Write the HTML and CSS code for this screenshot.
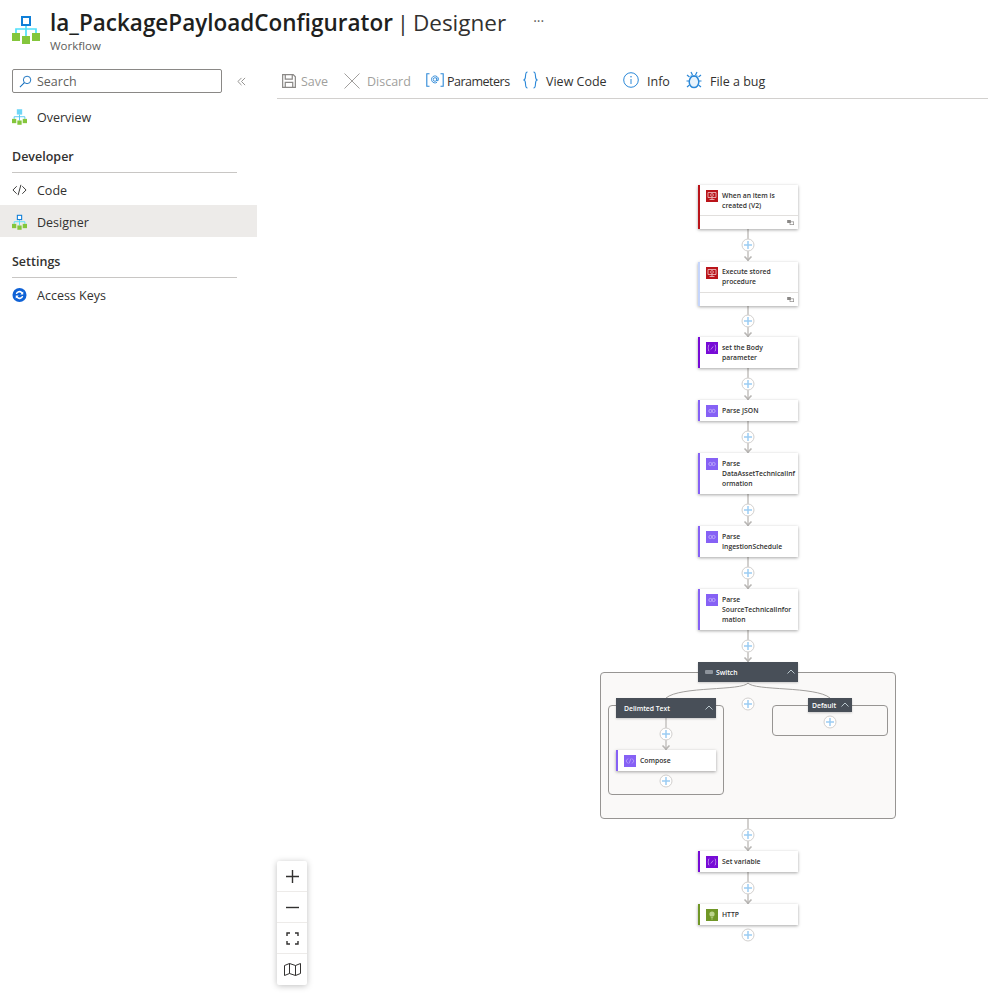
FILE: index.html
```html
<!DOCTYPE html>
<html lang="en">
<head>
    <meta charset="UTF-8">
    <meta name="viewport" content="width=device-width, initial-scale=1.0">
    <link rel="stylesheet" href="styles.css">
    <title>la_PackagePayloadConfigurator | Designer</title>
</head>
<body>

    <svg class="defs" width="0" height="0">
        <symbol id="flowIcon" viewBox="0 0 28 29">
            <path d="M14 10v11M4 18v-4h20v4" fill="none" stroke="#50e0fa" stroke-width="1.700"/>
            <rect x="10" y="2" width="8" height="8" fill="#fff" stroke="#0f7fd8" stroke-width="2"/>
            <rect x="0" y="18" width="8" height="8" fill="#84c63c"/>
            <rect x="10" y="21" width="8" height="8" fill="#84c63c"/>
            <rect x="20" y="18" width="8" height="8" fill="#84c63c"/>
        </symbol>
        <symbol id="flowIconLight" viewBox="0 0 28 29">
            <path d="M14 10v11M4 18v-4h20v4" fill="none" stroke="#50c8f0" stroke-width="1.700"/>
            <rect x="9" y="0" width="10" height="10" fill="#6fd6f7"/>
            <rect x="0" y="18" width="8" height="8" fill="#84c63c"/>
            <rect x="10" y="21" width="8" height="8" fill="#84c63c"/>
            <rect x="20" y="18" width="8" height="8" fill="#84c63c"/>
        </symbol>
        <symbol id="sqlIcon" viewBox="0 0 12 12">
            <rect width="12" height="12" fill="#ba141a"/>
            <path d="M2 2.500h8v5h-8zM3.500 9.500h5M6 7.500v2" fill="none" stroke="#f0c8ca" stroke-width=".8"/>
            <circle cx="6" cy="5" r="1.400" fill="none" stroke="#f0c8ca" stroke-width=".7"/>
        </symbol>
        <symbol id="varIcon" viewBox="0 0 12 12">
            <rect width="12" height="12" fill="#770bd6"/>
            <path d="M3.300 2.500c-1.300 0-.3 3-1.300 3.500 1 .5 0 3.500 1.300 3.500M8.700 2.500c1.300 0 .3 3 1.300 3.500-1 .5 0 3.500-1.300 3.500M4.800 7.500l2.400-3" fill="none" stroke="#cfb0ef" stroke-width=".7"/>
        </symbol>
        <symbol id="jsonIcon" viewBox="0 0 12 12">
            <rect width="12" height="12" fill="#8661f5"/>
            <circle cx="4.400" cy="6" r="1.600" fill="none" stroke="#c4b2fa" stroke-width=".8"/>
            <circle cx="7.600" cy="6" r="1.600" fill="none" stroke="#c4b2fa" stroke-width=".8"/>
        </symbol>
        <symbol id="composeIcon" viewBox="0 0 12 12">
            <rect width="12" height="12" fill="#8661f5"/>
            <path d="M4 3.500L2 6l2 2.500M8 3.500L10 6 8 8.500M5 8.500l2-5" fill="none" stroke="#c4b2fa" stroke-width=".7"/>
        </symbol>
        <symbol id="httpIcon" viewBox="0 0 12 12">
            <rect width="12" height="12" fill="#709727"/>
            <circle cx="6" cy="5" r="2.600" fill="#bcd48c"/>
            <path d="M4.800 8.600h2.400M5.200 10h1.600" stroke="#bcd48c" stroke-width=".8"/>
        </symbol>
        <symbol id="linkIcon" viewBox="0 0 8 6">
            <rect x="0" y="0" width="4.400" height="3.600" fill="#8a8886"/>
            <rect x="3.400" y="2.200" width="4.400" height="3.400" fill="none" stroke="#8a8886" stroke-width=".8"/>
        </symbol>
    </svg>

    <header class="page-head">
        <svg class="head-icon"><use href="#flowIcon"/></svg>
        <div class="head-text">
            <h1><b>la_PackagePayloadConfigurator</b> | Designer</h1>
            <p>Workflow</p>
        </div>
        <span class="head-more">···</span>
    </header>

    <div class="page-body">
        <nav class="side">
            <div class="search-row">
                <div class="search-box">
                    <svg class="search-icon" viewBox="0 0 14 14"><circle cx="8.700" cy="5.300" r="4" fill="none" stroke="#0f6cbd"/><path d="M5.800 8.200L1 13" stroke="#0f6cbd" stroke-width="1.100"/></svg>
                    <span>Search</span>
                </div>
                <svg class="collapse" viewBox="0 0 10 10"><path d="M5 1L1 5l4 4M9 1L5 5l4 4" fill="none" stroke="#8a8886"/></svg>
            </div>
            <a class="nav-item overview"><svg class="nav-icon"><use href="#flowIconLight"/></svg>Overview</a>
            <h2 class="nav-title">Developer</h2>
            <a class="nav-item">
                <svg class="nav-icon" viewBox="0 0 16 16"><path d="M5 4L1 8l4 4M11 4l4 4-4 4M9.500 2.500l-3 11" fill="none" stroke="#323130"/></svg>Code
            </a>
            <a class="nav-item active"><svg class="nav-icon"><use href="#flowIcon"/></svg>Designer</a>
            <h2 class="nav-title settings">Settings</h2>
            <a class="nav-item">
                <svg class="nav-icon" viewBox="0 0 16 16">
                    <circle cx="8" cy="8" r="7.500" fill="#0f62d6"/>
                    <path d="M4 7a4 4 0 0 1 7-2l1-.8v3.300H8.800l1.200-1.200A2.700 2.700 0 0 0 5.400 7zM12 9a4 4 0 0 1-7 2l-1 .8V8.500h3.200L6 9.700A2.700 2.700 0 0 0 10.600 9z" fill="#fff"/>
                </svg>Access Keys
            </a>
        </nav>

        <main class="main">
            <div class="command-bar">
                <span class="cmd disabled cmd-save">
                    <svg viewBox="0 0 15 15"><path d="M.7.700h11.300l2.300 2.300v11.300H.7zM3.500 .700v4.800h7.500V.700M3.500 14.300V9h8v5.300" fill="none" stroke="#8a8886" stroke-width="1.300"/></svg>Save
                </span>
                <span class="cmd disabled cmd-discard">
                    <svg class="wide" viewBox="0 0 16 16"><path d="M.5.500l15 15M15.500.500l-15 15" stroke="#a19f9d"/></svg>Discard
                </span>
                <span class="cmd cmd-params">
                    <svg class="params" viewBox="0 0 18 14"><path d="M3.500.700H.8v12.600h2.700M14.500.700h2.700v12.600h-2.700" fill="none" stroke="#2b88d8" stroke-width="1.100"/><circle cx="9" cy="6.500" r="1.800" fill="none" stroke="#2b88d8" stroke-width=".9"/><path d="M10.800 4.500v3.200q1.700.6 1.700-1.400a3.500 3.500 0 1 0-1.500 3" fill="none" stroke="#2b88d8" stroke-width=".9"/></svg>Parameters
                </span>
                <span class="cmd cmd-code">
                    <svg viewBox="0 0 15 18"><path d="M4.500 1C1 1 4 8 1 9c3 1 0 8 3.500 8M10.500 1C14 1 11 8 14 9c-3 1 0 8-3.500 8" fill="none" stroke="#2b88d8" stroke-width="1.100"/></svg>View Code
                </span>
                <span class="cmd cmd-info">
                    <svg viewBox="0 0 16 16"><circle cx="8" cy="8" r="7.300" fill="none" stroke="#2b88d8"/><path d="M8 7v5" stroke="#2b88d8"/><circle cx="8" cy="4.700" r=".8" fill="#2b88d8"/></svg>Info
                </span>
                <span class="cmd cmd-bug">
                    <svg viewBox="0 0 16 18"><ellipse cx="8" cy="10.800" rx="4.800" ry="5.800" fill="#e8f3fc" stroke="#2b88d8" stroke-width="1.500"/><path d="M4.500 5.200h7M5 1l1.500 3M11 1L9.500 4M3 10H.5M15.500 10H13M3.500 14L1 16M12.500 14l2.500 2M3.500 6L1 4M12.500 6L15 4" fill="none" stroke="#2b88d8" stroke-width="1.200"/></svg>File a bug
                </span>
            </div>

            <div class="canvas">
                <div class="group group-switch"></div>
                <div class="group group-case"></div>
                <div class="group group-default"></div>

                <!-- coordinates in the viewBox are page coordinates -->
                <svg class="wires" viewBox="257 99 731 897">
                    <defs>
                        <path id="arrow" d="M-3.500-4.500L0-1 3.500-4.500" fill="none" stroke="#b8b6b4" stroke-width="1.600"/>
                        <g id="plus">
                            <circle r="6" fill="#fff" stroke="#d2d0ce"/>
                            <path d="M-4 0h8M0-4v8" stroke="#9ccdf3" stroke-width="1.500"/>
                        </g>
                    </defs>
                    <path class="wire" d="M748 229V261M748 305V337M748 368V400M748 421V453M748 494V526M748 557V589M748 630V662M748 819V851M748 872V904M666 718V750"/>
                    <path class="curve" d="M748 683C742 691 680 686 666 698M748 683C754 691 816 686 830 698"/>
                    <use href="#arrow" x="748" y="261"/>
                    <use href="#arrow" x="748" y="337"/>
                    <use href="#arrow" x="748" y="400"/>
                    <use href="#arrow" x="748" y="453"/>
                    <use href="#arrow" x="748" y="526"/>
                    <use href="#arrow" x="748" y="589"/>
                    <use href="#arrow" x="748" y="662"/>
                    <use href="#arrow" x="748" y="851"/>
                    <use href="#arrow" x="748" y="904"/>
                    <use href="#arrow" x="666" y="750"/>
                    <use href="#plus" x="748" y="245"/>
                    <use href="#plus" x="748" y="321"/>
                    <use href="#plus" x="748" y="384"/>
                    <use href="#plus" x="748" y="437"/>
                    <use href="#plus" x="748" y="510"/>
                    <use href="#plus" x="748" y="573"/>
                    <use href="#plus" x="748" y="646"/>
                    <use href="#plus" x="748" y="704"/>
                    <use href="#plus" x="666" y="734"/>
                    <use href="#plus" x="666" y="781"/>
                    <use href="#plus" x="830" y="722"/>
                    <use href="#plus" x="748" y="835"/>
                    <use href="#plus" x="748" y="888"/>
                    <use href="#plus" x="748" y="935"/>
                </svg>

                <div class="card sql n1">
                    <div class="card-main"><svg class="card-icon"><use href="#sqlIcon"/></svg><span>When an item is<br>created (V2)</span></div>
                    <div class="card-foot"><svg><use href="#linkIcon"/></svg></div>
                </div>
                <div class="card sql pale n2">
                    <div class="card-main"><svg class="card-icon"><use href="#sqlIcon"/></svg><span>Execute stored<br>procedure</span></div>
                    <div class="card-foot"><svg><use href="#linkIcon"/></svg></div>
                </div>
                <div class="card var n3">
                    <div class="card-main"><svg class="card-icon"><use href="#varIcon"/></svg><span>set the Body<br>parameter</span></div>
                </div>
                <div class="card json n4">
                    <div class="card-main"><svg class="card-icon"><use href="#jsonIcon"/></svg><span>Parse JSON</span></div>
                </div>
                <div class="card json n5">
                    <div class="card-main"><svg class="card-icon"><use href="#jsonIcon"/></svg><span>Parse<br>DataAssetTechnicalInf<br>ormation</span></div>
                </div>
                <div class="card json n6">
                    <div class="card-main"><svg class="card-icon"><use href="#jsonIcon"/></svg><span>Parse<br>IngestionSchedule</span></div>
                </div>
                <div class="card json n7">
                    <div class="card-main"><svg class="card-icon"><use href="#jsonIcon"/></svg><span>Parse<br>SourceTechnicalInfor<br>mation</span></div>
                </div>

                <div class="scope scope-switch">
                    <svg class="scope-glyph" viewBox="0 0 8 4"><rect width="8" height="4" rx="1" fill="#8d939b"/></svg>
                    <span>Switch</span>
                    <svg class="chevron" viewBox="0 0 8 5"><path d="M.5 4.500L4 1l3.500 3.500" fill="none" stroke="#b9c7cc"/></svg>
                </div>
                <div class="scope scope-case">
                    <span>Delimted Text</span>
                    <svg class="chevron" viewBox="0 0 8 5"><path d="M.5 4.500L4 1l3.500 3.500" fill="none" stroke="#b9c7cc"/></svg>
                </div>
                <div class="scope scope-default">
                    <span>Default</span>
                    <svg class="chevron" viewBox="0 0 8 5"><path d="M.5 4.500L4 1l3.500 3.500" fill="none" stroke="#b9c7cc"/></svg>
                </div>

                <div class="card json n8">
                    <div class="card-main"><svg class="card-icon"><use href="#composeIcon"/></svg><span>Compose</span></div>
                </div>
                <div class="card var n9">
                    <div class="card-main"><svg class="card-icon"><use href="#varIcon"/></svg><span>Set variable</span></div>
                </div>
                <div class="card http n10">
                    <div class="card-main"><svg class="card-icon"><use href="#httpIcon"/></svg><span>HTTP</span></div>
                </div>

                <div class="zoom-tools">
                    <button><svg viewBox="0 0 13 13"><path d="M6.500 0v13M0 6.500h13" stroke="#323130" stroke-width="1.400"/></svg></button>
                    <button><svg viewBox="0 0 13 13"><path d="M0 6.500h13" stroke="#323130" stroke-width="1.400"/></svg></button>
                    <button><svg viewBox="0 0 13 13"><path d="M1 4V1h3M9 1h3v3M12 9v3H9M4 12H1V9" fill="none" stroke="#323130" stroke-width="1.400"/></svg></button>
                    <button><svg class="map" viewBox="0 0 17 13"><path d="M.5 2.500l5-2 6 2 5-2v10l-5 2-6-2-5 2zM5.500.500v10M11.500 2.500v10" fill="none" stroke="#323130"/></svg></button>
                </div>
            </div>
        </main>
    </div>

</body>
</html>
```

FILE: styles.css
```css
html, body {
    height: 100%;
}

body {
    margin: 0;
    font-family: "Open Sans", "Noto Sans", Arial, sans-serif;
    color: #323130;
    background-color: #fff;
    display: flex;
    flex-direction: column;
    overflow: hidden;
}

.defs {
    position: absolute;
}

/* page title */
.page-head {
    height: 60px;
    display: flex;
    align-items: flex-start;
    padding: 8px 0 0 12px;
    box-sizing: border-box;
}

.head-icon {
    width: 28px;
    height: 29px;
    margin: 7px 10px 0 0;
    flex-shrink: 0;
}

.head-text h1 {
    margin: 0;
    font-size: 22.500px;
    line-height: 30px;
    font-weight: 400;
    color: #323130;
    word-spacing: -2px;
}

.head-text h1 b {
    font-weight: 600;
    color: #201f1e;
}

.head-text p {
    margin: 0;
    font-size: 11.500px;
    line-height: 16px;
    color: #605e5c;
}

.head-more {
    margin: 3px 0 0 27px;
    font-size: 14px;
    line-height: 20px;
    color: #605e5c;
}

.page-body {
    flex: 1;
    display: flex;
    min-height: 0;
}

/* left menu */
.side {
    width: 257px;
    flex-shrink: 0;
    font-size: 12.500px;
}

.search-row {
    display: flex;
    align-items: center;
    padding: 9px 0 0 12px;
    height: 24px;
    margin-bottom: 8px;
}

.search-box {
    width: 210px;
    height: 24px;
    box-sizing: border-box;
    border: 1px solid #8a8886;
    border-radius: 2px;
    display: flex;
    align-items: center;
    padding-left: 6px;
    color: #605e5c;
}

.search-icon {
    width: 13px;
    height: 13px;
    margin-right: 5px;
}

.collapse {
    width: 9px;
    height: 9px;
    margin-left: 15px;
}

.nav-item {
    height: 32px;
    display: flex;
    align-items: center;
    padding-left: 12px;
    color: #323130;
}

.nav-icon {
    width: 15px;
    height: 16px;
    margin-right: 10px;
}

.nav-item.active {
    background-color: #edebe9;
    padding-top: 2px;
    height: 30px;
    margin-top: -1px;
}

.nav-title {
    margin: 16px 20px 1px 12px;
    height: 23px;
    font-size: 12.500px;
    line-height: 16px;
    font-weight: 600;
    color: #323130;
    border-bottom: 1px solid #c8c6c4;
}

.nav-title.settings {
    margin-top: 17px;
}

/* commands */
.main {
    flex: 1;
    display: flex;
    flex-direction: column;
    min-width: 0;
}

.command-bar {
    height: 39px;
    margin-left: 20px;
    box-sizing: border-box;
    border-bottom: 1px solid #d2d0ce;
    display: flex;
    align-items: center;
    padding: 4px 0 0 5px;
    font-size: 12.500px;
}

.cmd {
    display: flex;
    align-items: center;
    white-space: nowrap;
}

.cmd svg {
    width: 14px;
    height: 14px;
    margin-right: 5px;
}

.cmd.disabled {
    color: #a19f9d;
}

.cmd-save {
    width: 62px;
}

.cmd-discard {
    width: 82px;
}

.cmd svg.wide {
    width: 16px;
    height: 16px;
    margin-right: 7px;
}

.cmd-params {
    width: 97px;
    letter-spacing: -0.5px;
}

.cmd svg.params {
    width: 18px;
    margin: -3px 3px 0 0;
}

.cmd-code {
    width: 100px;
}

.cmd-code svg {
    width: 15px;
    height: 18px;
    margin: -3px 8px 0 0;
}

.cmd-info {
    width: 63px;
}

.cmd-info svg {
    width: 16px;
    height: 16px;
    margin: -3px 8px 0 0;
}

.cmd-bug svg {
    width: 16px;
    height: 18px;
    margin: -2px 8px 0 0;
}

/* designer canvas, node places are the content here */
.canvas {
    flex: 1;
    position: relative;
    overflow: hidden;
}

.wires {
    position: absolute;
    left: 0;
    top: 0;
    width: 731px;
    height: 897px;
}

.wire {
    fill: none;
    stroke: #d2d0ce;
    stroke-width: 2;
}

.curve {
    fill: none;
    stroke: #a19f9d;
    stroke-width: 1;
}

.group {
    position: absolute;
    box-sizing: border-box;
    background-color: #faf9f8;
    border: 1px solid #979593;
    border-radius: 4px;
}

.group-switch {
    left: 343px;
    top: 573px;
    width: 296px;
    height: 147px;
}

.group-case {
    left: 351px;
    top: 606px;
    width: 116px;
    height: 90px;
}

.group-default {
    left: 515px;
    top: 606px;
    width: 116px;
    height: 31px;
}

.card {
    position: absolute;
    left: 441px;
    width: 100px;
    box-sizing: border-box;
    background-color: #fff;
    border-left: 2px solid #8661f5;
    box-shadow: 0 1px 3px rgba(0, 0, 0, 0.35);
    font-size: 6.800px;
    line-height: 10px;
    font-weight: 600;
    color: #323130;
}

.card.sql {
    border-left-color: #ba141a;
}

.card.pale {
    border-left-color: #c5d5fb;
}

.card.var {
    border-left-color: #770bd6;
}

.card.http {
    border-left-color: #709727;
}

.card-main {
    display: flex;
    align-items: flex-start;
    padding: 5px 0 5px 6px;
    white-space: nowrap;
}

.card-main span {
    margin-top: 1px;
}

.card-icon {
    width: 12px;
    height: 12px;
    margin-right: 4px;
    flex-shrink: 0;
}

.card-foot {
    height: 14px;
    border-top: 1px solid #e1dfdd;
    display: flex;
    justify-content: flex-end;
    align-items: center;
    padding-right: 4px;
    box-sizing: border-box;
}

.card-foot svg {
    width: 7px;
    height: 5px;
}

.n1 { top: 86px; height: 44px; }
.n2 { top: 163px; height: 44px; }
.n3 { top: 238px; height: 31px; }
.n4 { top: 301px; height: 21px; }
.n5 { top: 354px; height: 41px; }
.n6 { top: 427px; height: 31px; }
.n7 { top: 490px; height: 41px; }
.n8 { top: 651px; left: 359px; height: 21px; }
.n9 { top: 752px; height: 21px; }
.n10 { top: 805px; height: 21px; }

.n1 .card-main, .n2 .card-main {
    height: 30px;
    box-sizing: border-box;
}

.n2 span {
    margin-top: 0;
}

.scope {
    position: absolute;
    box-sizing: border-box;
    background-color: #484f58;
    color: #fff;
    font-size: 6.800px;
    font-weight: 600;
    display: flex;
    align-items: center;
    box-shadow: 0 1px 2px rgba(0, 0, 0, 0.2);
}

.chevron {
    width: 8px;
    height: 5px;
    position: absolute;
    right: 3px;
    top: 7px;
}

.scope-switch {
    left: 441px;
    top: 563px;
    width: 100px;
    height: 20px;
    padding-left: 7px;
}

.scope-glyph {
    width: 8px;
    height: 4px;
    margin-right: 3px;
}

.scope-case {
    left: 359px;
    top: 599px;
    width: 100px;
    height: 20px;
    padding-left: 8px;
}

.scope-default {
    left: 551px;
    top: 599px;
    width: 44px;
    height: 14px;
    padding-left: 4px;
}

.scope-default .chevron {
    top: 4px;
}

/* zoom buttons */
.zoom-tools {
    position: absolute;
    left: 20px;
    top: 762px;
    width: 30px;
    background-color: #fff;
    border-radius: 2px;
    box-shadow: 0 1px 6px rgba(0, 0, 0, 0.25);
    display: flex;
    flex-direction: column;
}

.zoom-tools button {
    height: 31px;
    padding: 0;
    background: none;
    border: none;
    border-bottom: 1px solid #edebe9;
    display: flex;
    align-items: center;
    justify-content: center;
}

.zoom-tools button:last-child {
    border-bottom: none;
}

.zoom-tools svg {
    width: 13px;
    height: 13px;
}

.zoom-tools svg.map {
    width: 17px;
}
```
